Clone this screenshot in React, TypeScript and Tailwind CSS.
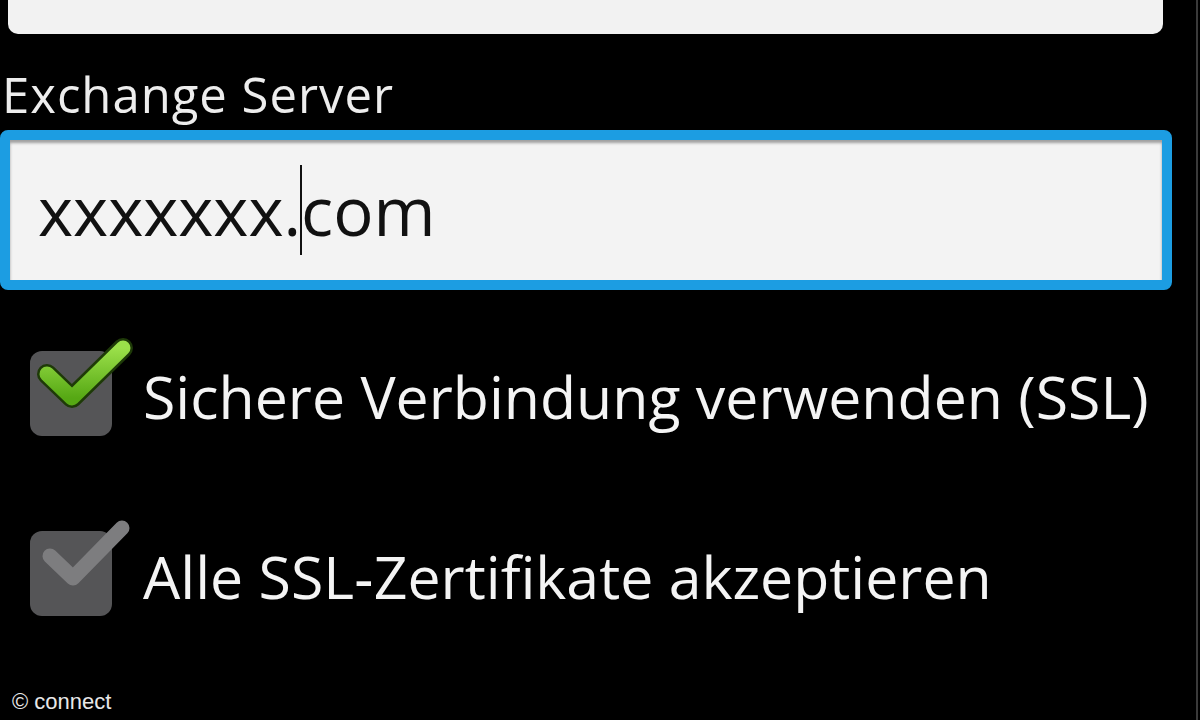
import { ReactNode } from "react";

function CheckRow({ active, children }: { active: boolean; children: ReactNode }) {
  return (
    <div className="flex items-center h-[86px]">
      <div className="relative ml-[30px] w-[82px] h-[85px] rounded-[12px] bg-[#555557]">
        <svg className="absolute left-0 top-[-10px] overflow-visible" width="100" height="100" viewBox="0 0 100 100">
          <defs>
            <linearGradient id="chk" x1="0" y1="0" x2="0" y2="1">
              <stop offset="0" stopColor="#9be04a" />
              <stop offset="1" stopColor="#56a814" />
            </linearGradient>
          </defs>
          {active ? (
            <>
              <path d="M17 33 L42 57 L93 7" fill="none" stroke="#1e3a08" strokeWidth="20" strokeLinecap="round" strokeLinejoin="round" />
              <path d="M17 33 L42 57 L93 7" fill="none" stroke="url(#chk)" strokeWidth="15" strokeLinecap="round" strokeLinejoin="round" />
            </>
          ) : (
            <path d="M20 35 L43 57 L92 7" fill="none" stroke="#7d7d7f" strokeWidth="15" strokeLinecap="round" strokeLinejoin="round" />
          )}
        </svg>
      </div>
      <span className="ml-[31px] pt-[6px] text-[59px] leading-none text-[#f4f4f4]">
        {children}
      </span>
    </div>
  );
}

export default function App() {
  return (
    <div className="w-[1200px] h-[720px] bg-black overflow-hidden relative" style={{ fontFamily: "'Open Sans', sans-serif" }}>
      <div className="ml-2 w-[1155px] h-[34px] bg-[#f2f2f2] rounded-b-[10px]" />
      <div className="mt-[36px] pl-[2px] text-[49px] leading-[48px] tracking-[1px] text-[#ededed]">Exchange Server</div>
      <div className="mt-[12px] w-[1172px] h-[160px] border-[10px] border-[#1c9de2] rounded-[8px] bg-[#f3f3f3] shadow-[inset_0_3px_3px_rgba(0,0,0,0.35)] flex items-center">
        <span className="ml-[28px] text-[67px] text-[#111] leading-none">xxxxxxx.</span>
        <span className="w-[2px] h-[90px] bg-[#111] -mx-[1px]" />
        <span className="text-[67px] text-[#111] leading-none">com</span>
      </div>
      <div className="mt-[60px]">
        <CheckRow active>Sichere Verbindung verwenden (SSL)</CheckRow>
      </div>
      <div className="mt-[94px]">
        <CheckRow active={false}>Alle SSL‑Zertifikate akzeptieren</CheckRow>
      </div>
      <div className="absolute left-[12px] top-[685px] text-[22px] text-[#e8e8e8]" style={{ fontFamily: "'Liberation Sans', Arial, sans-serif" }}>
        © connect
      </div>
      <div className="absolute right-[2px] top-0 w-[2px] h-[720px] bg-[#3a3a3a]" />
    </div>
  );
}
